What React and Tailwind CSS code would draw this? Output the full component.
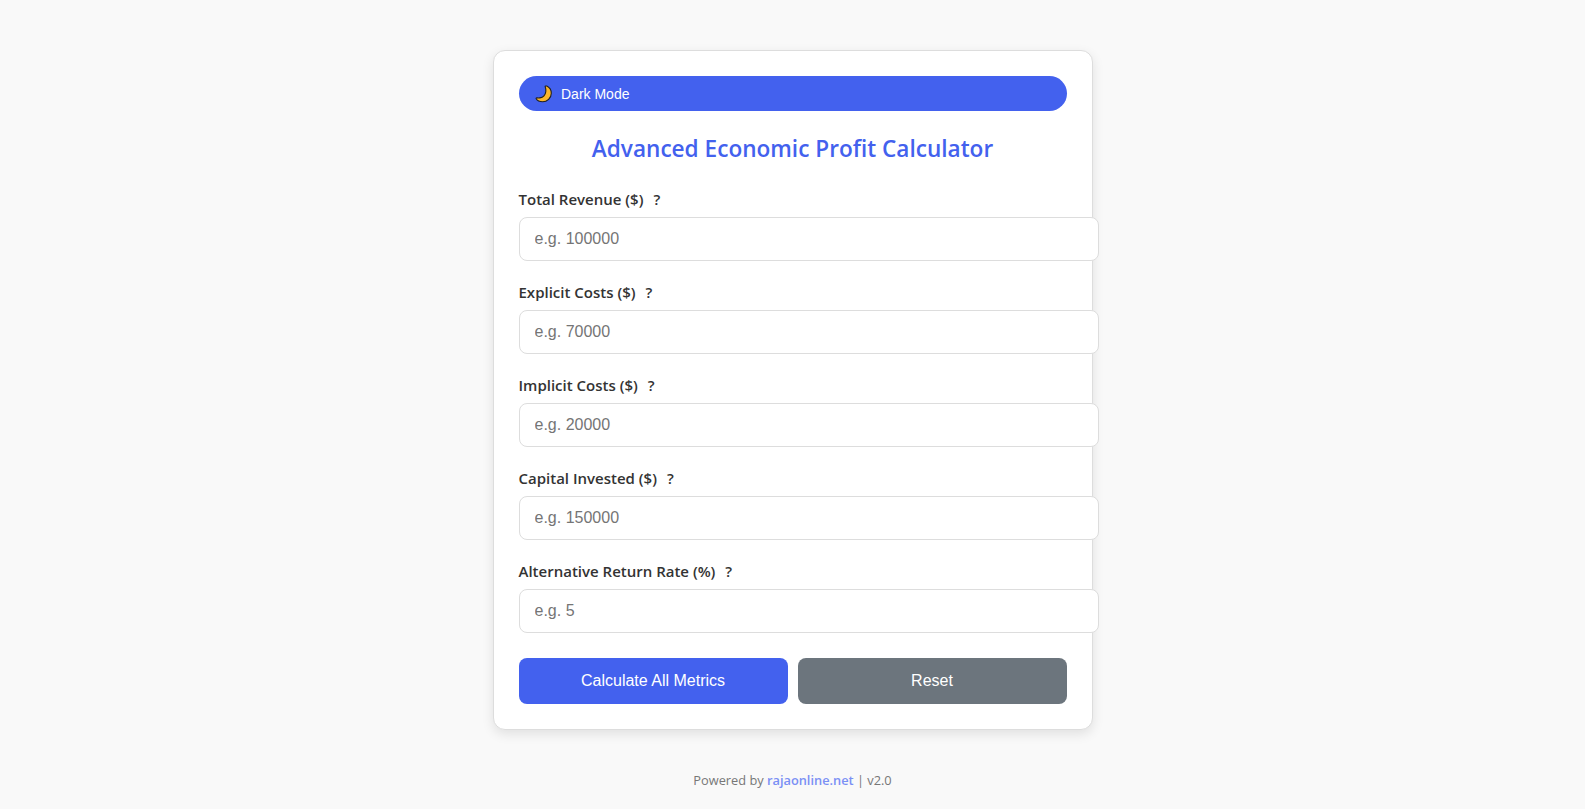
const fields = [
  { label: "Total Revenue ($)", placeholder: "e.g. 100000" },
  { label: "Explicit Costs ($)", placeholder: "e.g. 70000" },
  { label: "Implicit Costs ($)", placeholder: "e.g. 20000" },
  { label: "Capital Invested ($)", placeholder: "e.g. 150000" },
  { label: "Alternative Return Rate (%)", placeholder: "e.g. 5" },
];

const Moon = () => (
  <svg width="18" height="18" viewBox="0 0 18 18" className="shrink-0">
    <path
      d="M11.800 1c2 1 4.500 3.200 4.500 7.200 0 4.900-4.200 8.500-8.700 8.500-2.800 0-5.400-1.200-6.400-2.900-.3-.6.100-1 .7-.9 1 .2 2 .2 3 0 3.300-.6 5.500-3.200 5.900-6.300.2-1.700.1-3.100-.6-4.800-.2-.5.100-1 .6-.8z"
      fill="#fbb62b"
      stroke="#1f1f1f"
      strokeWidth="1.100"
      strokeLinejoin="round"
    />
  </svg>
);

const Field = ({ label, placeholder }) => (
  <div className="mb-5">
    <label className="block mb-[7px] text-[15px] leading-[22px] font-semibold text-[#333] font-['Open_Sans',sans-serif]">
      {label}
      <span className="ml-[10px]">?</span>
    </label>
    <input
      type="number"
      placeholder={placeholder}
      className="box-content w-full block px-[15px] py-3 border border-[#ddd] rounded-lg bg-white text-base leading-[18px] font-['Liberation_Sans',sans-serif] placeholder:text-[#757575] outline-none"
    />
  </div>
);

export default function App() {
  return (
    <div className="min-h-[809px] bg-[#f9f9f9] pt-[50px] font-['Open_Sans',sans-serif]">
      <div className="w-[600px] mx-auto bg-white border border-[#ddd] rounded-xl p-[25px] shadow-[0_4px_12px_rgba(0,0,0,0.1)]">
        <button className="w-full h-[35px] flex items-center gap-[8.500px] px-4 rounded-full bg-[#4361ee] text-white text-sm font-['Liberation_Sans',sans-serif]">
          <Moon />
          Dark Mode
        </button>
        <h1 className="mt-[21px] mb-[23px] text-center text-[22.6px] leading-[33px] font-semibold text-[#4361ee]">
          Advanced Economic Profit Calculator
        </h1>
        {fields.map((f) => (
          <Field key={f.label} label={f.label} placeholder={f.placeholder} />
        ))}
        <div className="flex gap-[10px] mt-[25px]">
          <button className="flex-1 h-[46px] rounded-lg bg-[#4361ee] text-white text-base font-['Liberation_Sans',sans-serif]">
            Calculate All Metrics
          </button>
          <button className="flex-1 h-[46px] rounded-lg bg-[#6c757d] text-white text-base font-['Liberation_Sans',sans-serif]">
            Reset
          </button>
        </div>
      </div>
      <footer className="mt-[40px] text-center text-[12.800px] leading-5 text-[#777]">
        Powered by <a href="#" className="font-semibold text-[#7b90f5]">rajaonline.net</a> | v2.0
      </footer>
    </div>
  );
}
